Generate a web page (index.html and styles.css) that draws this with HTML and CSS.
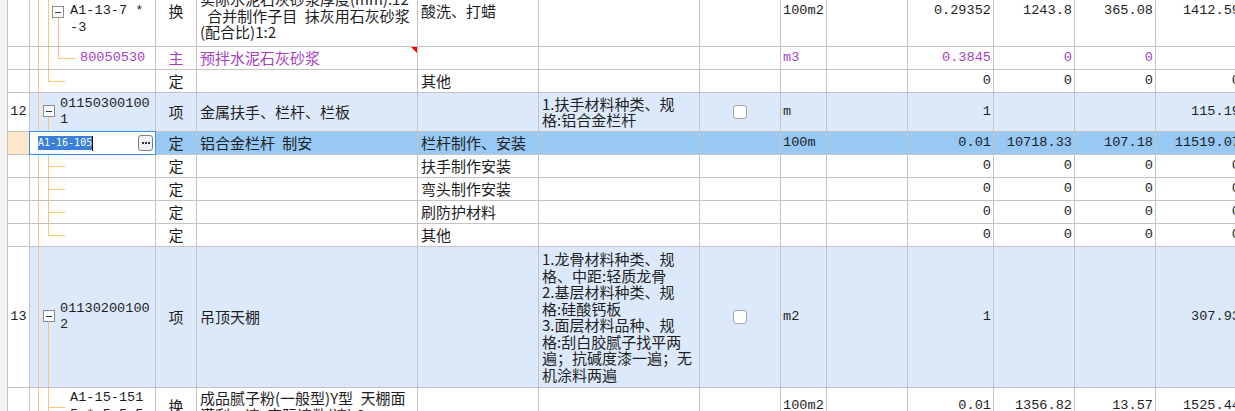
FILE: index.html
```html
<!DOCTYPE html>
<html lang="zh-CN">
<head>
<meta charset="utf-8">
<title>分部分项</title>
<link rel="stylesheet" href="styles.css">
</head>
<body>
<div class="page">
  <div class="gutter"></div>
  <div class="sheet">
    <!-- row: A1-13-7 -->
    <div class="row r70">
      <div class="c num"></div>
      <div class="c code lv-sub">
        <span class="ln t1"></span><span class="ln t2"></span><span class="ln t3b"></span>
        <span class="box box-sub"></span>
        <div class="txt mono shift-code">A1-13-7 *<br>-3</div>
      </div>
      <div class="c t">换</div>
      <div class="c nm"><div class="txt shift-name">实际水泥石灰砂浆厚度(mm):12<br>&nbsp;合并制作子目 抹灰用石灰砂浆<br>(配合比)1:2</div></div>
      <div class="c">酸洗、打蜡</div>
      <div class="c"></div>
      <div class="c"></div>
      <div class="c unit">100m2</div>
      <div class="c"></div>
      <div class="c n">0.29352</div>
      <div class="c n">1243.8</div>
      <div class="c n">365.08</div>
      <div class="c n">1412.59</div>
    </div>
    <!-- row: 80050530 -->
    <div class="row r23 p">
      <div class="c num"></div>
      <div class="c code lv-res">
        <span class="ln t1"></span><span class="ln t2"></span><span class="ln t3t"></span><span class="ln h3"></span>
        <span class="txt mono">80050530</span>
      </div>
      <div class="c t">主</div>
      <div class="c nm flag">预拌水泥石灰砂浆</div>
      <div class="c"></div>
      <div class="c"></div>
      <div class="c"></div>
      <div class="c unit">m3</div>
      <div class="c"></div>
      <div class="c n">0.3845</div>
      <div class="c n">0</div>
      <div class="c n">0</div>
      <div class="c n"></div>
    </div>
    <!-- row: 定 其他 -->
    <div class="row r23">
      <div class="c num"></div>
      <div class="c code lv-sub">
        <span class="ln t1"></span><span class="ln t2t"></span><span class="ln h2"></span>
      </div>
      <div class="c t">定</div>
      <div class="c nm"></div>
      <div class="c">其他</div>
      <div class="c"></div>
      <div class="c"></div>
      <div class="c unit"></div>
      <div class="c"></div>
      <div class="c n">0</div>
      <div class="c n">0</div>
      <div class="c n">0</div>
      <div class="c n">0</div>
    </div>
    <!-- row 12 -->
    <div class="row r39 item">
      <div class="c num">12</div>
      <div class="c code lv-item">
        <span class="ln t1"></span><span class="ln t2b"></span>
        <span class="box box-item"></span>
        <div class="txt mono">01150300100<br>1</div>
      </div>
      <div class="c t">项</div>
      <div class="c nm">金属扶手、栏杆、栏板</div>
      <div class="c"></div>
      <div class="c"><div class="txt">1.扶手材料种类、规<br>格:铝合金栏杆</div></div>
      <div class="c ck"><span class="chk"></span></div>
      <div class="c unit">m</div>
      <div class="c"></div>
      <div class="c n">1</div>
      <div class="c n"></div>
      <div class="c n"></div>
      <div class="c n">115.19</div>
    </div>
    <!-- row: A1-16-105 (selected) -->
    <div class="row r23 sel">
      <div class="c num"></div>
      <div class="c code editing">
        <div class="editor"><span class="seltext">A1-16-105</span><span class="caret"></span><span class="more"><span class="dots"></span></span></div>
      </div>
      <div class="c t">定</div>
      <div class="c nm">铝合金栏杆 制安</div>
      <div class="c">栏杆制作、安装</div>
      <div class="c"></div>
      <div class="c"></div>
      <div class="c unit">100m</div>
      <div class="c"></div>
      <div class="c n">0.01</div>
      <div class="c n">10718.33</div>
      <div class="c n">107.18</div>
      <div class="c n">11519.07</div>
    </div>
    <div class="row r23">
      <div class="c num"></div>
      <div class="c code"><span class="ln t1"></span><span class="ln t2"></span><span class="ln h2"></span></div>
      <div class="c t">定</div>
      <div class="c nm"></div>
      <div class="c">扶手制作安装</div>
      <div class="c"></div><div class="c"></div><div class="c unit"></div><div class="c"></div>
      <div class="c n">0</div><div class="c n">0</div><div class="c n">0</div><div class="c n">0</div>
    </div>
    <div class="row r23">
      <div class="c num"></div>
      <div class="c code"><span class="ln t1"></span><span class="ln t2"></span><span class="ln h2"></span></div>
      <div class="c t">定</div>
      <div class="c nm"></div>
      <div class="c">弯头制作安装</div>
      <div class="c"></div><div class="c"></div><div class="c unit"></div><div class="c"></div>
      <div class="c n">0</div><div class="c n">0</div><div class="c n">0</div><div class="c n">0</div>
    </div>
    <div class="row r23">
      <div class="c num"></div>
      <div class="c code"><span class="ln t1"></span><span class="ln t2"></span><span class="ln h2"></span></div>
      <div class="c t">定</div>
      <div class="c nm"></div>
      <div class="c">刷防护材料</div>
      <div class="c"></div><div class="c"></div><div class="c unit"></div><div class="c"></div>
      <div class="c n">0</div><div class="c n">0</div><div class="c n">0</div><div class="c n">0</div>
    </div>
    <div class="row r23">
      <div class="c num"></div>
      <div class="c code"><span class="ln t1"></span><span class="ln t2t"></span><span class="ln h2"></span></div>
      <div class="c t">定</div>
      <div class="c nm"></div>
      <div class="c">其他</div>
      <div class="c"></div><div class="c"></div><div class="c unit"></div><div class="c"></div>
      <div class="c n">0</div><div class="c n">0</div><div class="c n">0</div><div class="c n">0</div>
    </div>
    <!-- row 13 -->
    <div class="row r141 item">
      <div class="c num">13</div>
      <div class="c code lv-item">
        <span class="ln t1"></span><span class="ln t2b"></span>
        <span class="box box-item"></span>
        <div class="txt mono">01130200100<br>2</div>
      </div>
      <div class="c t">项</div>
      <div class="c nm">吊顶天棚</div>
      <div class="c"></div>
      <div class="c"><div class="txt">1.龙骨材料种类、规<br>格、中距:轻质龙骨<br>2.基层材料种类、规<br>格:硅酸钙板<br>3.面层材料品种、规<br>格:刮白胶腻子找平两<br>遍；抗碱度漆一遍；无<br>机涂料两遍</div></div>
      <div class="c ck"><span class="chk"></span></div>
      <div class="c unit">m2</div>
      <div class="c"></div>
      <div class="c n">1</div>
      <div class="c n"></div>
      <div class="c n"></div>
      <div class="c n">307.93</div>
    </div>
    <!-- row: A1-15-151 -->
    <div class="row r38">
      <div class="c num"></div>
      <div class="c code lv-sub">
        <span class="ln t1"></span><span class="ln t2"></span><span class="ln h2"></span>
        <div class="txt mono">A1-15-151<br>5 * 5.5 5</div>
      </div>
      <div class="c t">换</div>
      <div class="c nm"><div class="txt">成品腻子粉(一般型)Y型 天棚面<br>满刮一遍 实际遍数(遍):2</div></div>
      <div class="c"></div>
      <div class="c"></div>
      <div class="c"></div>
      <div class="c unit">100m2</div>
      <div class="c"></div>
      <div class="c n">0.01</div>
      <div class="c n">1356.82</div>
      <div class="c n">13.57</div>
      <div class="c n">1525.44</div>
    </div>
  </div>
</div>
</body>
</html>
```
FILE: styles.css
```css
* { box-sizing: border-box; }
html, body { margin: 0; padding: 0; background: #fff; }
body {
  width: 1235px;
  height: 411px;
  overflow: hidden;
  font-family: "Noto Sans CJK SC", "Liberation Sans", sans-serif;
  font-size: 15px;
  line-height: 16.5px;
  word-spacing: 4px;
  color: #1e1e1e;
}
.page { display: flex; height: 411px; overflow: hidden; }
.gutter { flex: 0 0 8px; background: #f2f2f2; border-right: 1px solid #c3c3c3; }
.sheet { flex: 0 0 auto; margin-top: -23px; }

.row {
  display: grid;
  grid-template-columns: 22px 126px 41px 221px 121px 161px 81px 46px 81px 86px 81px 81px 87px;
}
.r70 { height: 70px; }
.r23 { height: 23px; }
.r39 { height: 39px; }
.r141 { height: 141px; }
.r38 { height: 38px; }

.c {
  position: relative;
  display: flex;
  align-items: center;
  padding: 0 3px;
  border-right: 1px solid #c3c3c3;
  border-bottom: 1px solid #c3c3c3;
  white-space: nowrap;
  overflow: hidden;
}
.txt { white-space: nowrap; }
.mono, .n, .unit, .num {
  font-family: "Liberation Mono", "DejaVu Sans Mono", monospace;
  font-size: 13.6px;
  word-spacing: 0;
}
.num { justify-content: center; padding: 0; background: #fff; }
.t { justify-content: center; padding: 0; }
.n { justify-content: flex-end; padding: 0 2px 0 0; }
.unit { padding-left: 2px; }
.ck { justify-content: center; }

.item { background: #dce9fb; }
.sel { background: #98c8f4; }
.sel .num { background: #fde7cb; }
.p { color: #a53fc6; }

.shift-code { padding-top: 16.5px; }
.shift-name { padding-top: 9px; }

/* tree column */
.code { padding: 0; }
.lv-item { padding-left: 30px; }
.lv-sub { padding-left: 40px; }
.lv-res { padding-left: 50px; }
.ln { position: absolute; background: #fcc57c; }
.t1 { left: 8px; width: 1px; top: 0; bottom: -1px; }
.t2 { left: 18px; width: 1px; top: 0; bottom: -1px; }
.t2t { left: 18px; width: 1px; top: 0; height: 50%; }
.t2b { left: 18px; width: 1px; top: 50%; bottom: -1px; }
.t3t { left: 28px; width: 1px; top: 0; height: 50%; }
.t3b { left: 28px; width: 1px; top: 50%; bottom: -1px; }
.h2 { left: 18px; width: 17px; top: 50%; height: 1px; }
.h3 { left: 28px; width: 18px; top: 50%; height: 1px; }

.box {
  position: absolute;
  top: 50%;
  margin-top: -7px;
  width: 12px;
  height: 12px;
  border: 1px solid #8c8c8c;
  background: #fff;
}
.box::after {
  content: "";
  position: absolute;
  left: 2px;
  right: 2px;
  top: 5px;
  height: 1px;
  background: #333;
}
.box-item { left: 13px; }
.box-sub { left: 22px; margin-top: -6px; }

.chk {
  width: 14px;
  height: 14px;
  border: 1px solid #a6a6a6;
  border-radius: 3px;
  background: #fff;
}

.flag::after {
  content: "";
  position: absolute;
  top: 0;
  right: 0;
  border-top: 6px solid #f00;
  border-left: 6px solid transparent;
}

/* in-cell editor */
.editing { overflow: visible; }
.editor {
  position: absolute;
  left: -1px;
  top: -1px;
  width: 127px;
  height: 24px;
  border: 1px solid #3f8fe8;
  background: #fff;
  display: flex;
  align-items: center;
  padding-left: 8px;
  z-index: 2;
}
.seltext {
  display: inline-block;
  height: 14px;
  line-height: 14px;
  font-family: "DejaVu Sans Mono", "Liberation Mono", monospace;
  font-size: 10px;
  background: #3a80d8;
  color: #fff;
}
.caret { display: inline-block; width: 1px; height: 15px; background: #000; }
.more {
  position: absolute;
  right: 2px;
  top: 3px;
  width: 15px;
  height: 16px;
  border: 1px solid #7e7e7e;
  border-radius: 3px;
  background: #eef0f6;
}
.dots {
  position: absolute;
  left: 3px;
  top: 6px;
  width: 2px;
  height: 2px;
  background: #333;
  box-shadow: 3px 0 0 #333, 6px 0 0 #333;
}
```
